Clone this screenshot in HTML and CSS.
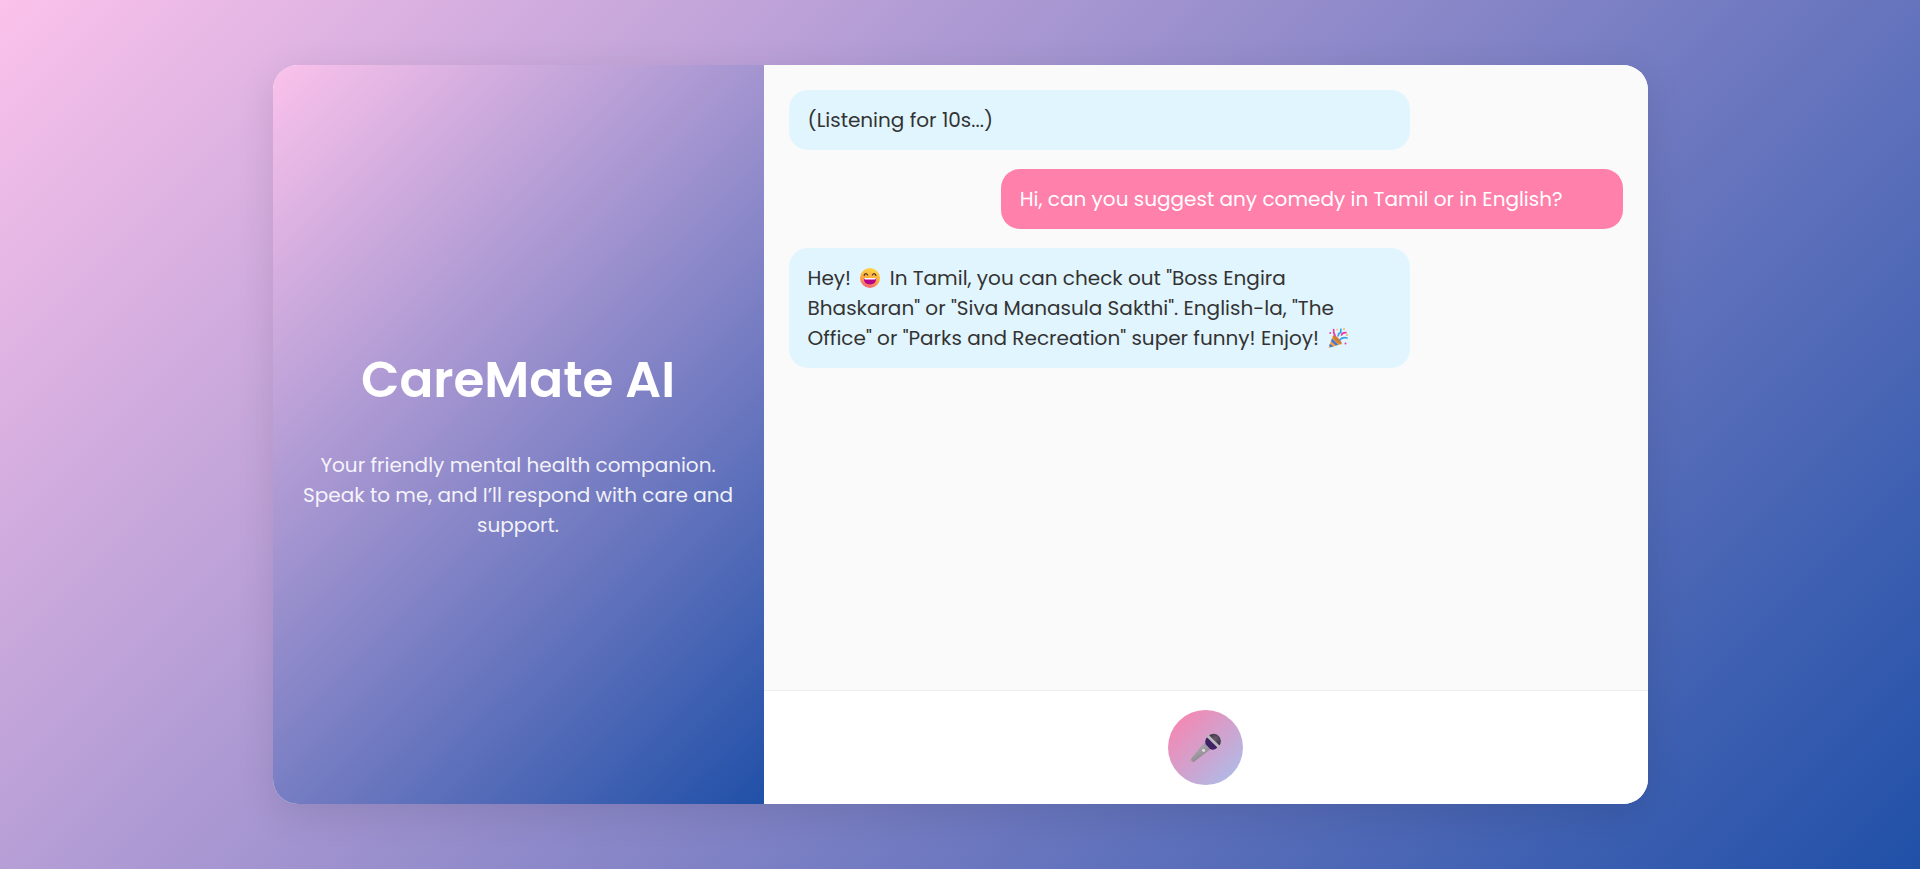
FILE: index.html
```html
<!DOCTYPE html>
<html lang="en">
<head>
<meta charset="utf-8">
<meta name="viewport" content="width=device-width, initial-scale=1">
<title>CareMate AI</title>
<link rel="stylesheet" href="styles.css">
</head>
<body>
<main class="card">
  <section class="intro">
    <h1 class="intro-title">CareMate AI</h1>
    <p class="intro-text">Your friendly mental health companion. Speak to me, and I’ll respond with care and support.</p>
  </section>
  <section class="chat">
    <div class="messages">
      <p class="message bot">(Listening for 10s...)</p>
      <p class="message user">Hi, can you suggest any comedy in Tamil or in English?</p>
      <p class="message bot">Hey! <svg class="emoji" viewBox="-2 0 28 24" role="img" aria-label="Grinning face"><defs><linearGradient id="face" x1="0.7" y1="0" x2="0.4" y2="1"><stop offset="0" stop-color="#ffd84a"/><stop offset="0.55" stop-color="#fdac3a"/><stop offset="1" stop-color="#f3607a"/></linearGradient></defs><circle cx="12" cy="12" r="10" fill="url(#face)"/><path d="M6.200 9.400q1.500-3.200 3.400-.4M14.400 9q1.900-2.800 3.400.4" fill="none" stroke="#5b3434" stroke-width="1.300" stroke-linecap="round"/><path d="M5.800 12h12.400q0 6.500-6.200 6.500T5.800 12z" fill="#b4008c"/><path d="M6.200 12h11.600q0 1.500-1.200 1.500H7.400Q6.200 13.500 6.200 12z" fill="#fff"/></svg> In Tamil, you can check out "Boss Engira Bhaskaran" or "Siva Manasula Sakthi". English-la, "The Office" or "Parks and Recreation" super funny! Enjoy! <svg class="emoji" viewBox="-2 0 28 24" role="img" aria-label="Party popper"><path d="M7 9.500l8.500 8.500L2.500 22z" fill="#f5a13c"/><path d="M6 12.500l6.500 6.200-2.800.9-4.700-4.400zM3.900 17.800l3.700 2.600-2.800.9-1.700-1.200z" fill="#4a78d6"/><ellipse cx="11.300" cy="13.800" rx="6" ry="2" transform="rotate(45 11.300 13.800)" fill="#cf8038"/><path d="M9 9.500Q7.200 7 7.600 3.500M15.500 9q.6-2.600 4.500-2.400" fill="none" stroke="#ee3aa0" stroke-width="1.700" stroke-linecap="round"/><path d="M12.200 9.800q.2-2.800 2.600-3.300-.2-2 .2-3.300M14 13.800q2.500-2.900 7-1.800" fill="none" stroke="#38a0e8" stroke-width="1.700" stroke-linecap="round"/><g fill="#e93aa0"><circle cx="4.200" cy="7" r=".9"/><circle cx="19.500" cy="17.500" r="1"/></g><g fill="#f6b743"><circle cx="18" cy="3" r=".9"/><circle cx="21" cy="9" r=".9"/><circle cx="11" cy="3.500" r=".8"/></g></svg></p>
    </div>
    <div class="controls">
      <button class="mic" type="button" aria-label="Speak"><svg class="mic-icon" viewBox="0 0 32 32" aria-hidden="true"><defs><linearGradient id="handle" x1=".2" y1="0" x2=".8" y2="1"><stop offset="0" stop-color="#b3afb5"/><stop offset=".5" stop-color="#9d999f"/><stop offset="1" stop-color="#7e7a82"/></linearGradient><radialGradient id="head" cx=".62" cy=".32" r=".7"><stop offset="0" stop-color="#655a6c"/><stop offset="1" stop-color="#292235"/></radialGradient></defs><path d="M14 11.800L1.300 27.600q-.8 1.400.4 2.600 1.300 1.200 2.800.4L20 18.500z" fill="url(#handle)"/><circle cx="23.700" cy="10" r="7.200" fill="url(#head)"/><path d="M17.200 6L27.500 16q-1.500 2.600-4.700 2.800-1.800 0-3-1l-4-4.300q-1.800-3.500 1.400-7.500z" fill="#3e2364"/><path d="M18 5.200L28.200 15.300" stroke="#bcb7c0" stroke-width="3" stroke-linecap="round"/><circle cx="13.600" cy="19.300" r="1.600" fill="#dedbe0"/></svg></button>
    </div>
  </section>
</main>
</body>
</html>
```
FILE: styles.css
```css
:root {
  --brand-gradient: linear-gradient(135deg, #fbc2eb 0%, #2050a8 100%);
}

body {
  margin: 0;
  min-height: 100vh;
  display: flex;
  align-items: center;
  justify-content: center;
  background: var(--brand-gradient);
  font-family: Poppins, Inter, sans-serif;
  font-size: 20px;
  line-height: 30px;
}

.card {
  display: grid;
  grid-template-columns: minmax(0, 10fr) minmax(0, 18fr);
  width: 90%;
  max-width: 1375px;
  height: 85vh;
  border-radius: 25px;
  overflow: hidden;
  background: #fff;
  box-shadow: 0 10px 38px rgba(0, 0, 0, 0.1);
}

.intro {
  padding: 37px 25px 24px;
  display: flex;
  flex-direction: column;
  align-items: center;
  justify-content: center;
  gap: 33px;
  background: var(--brand-gradient);
  color: #fff;
  text-align: center;
}

.intro-title {
  margin: 0;
  font-size: 50px;
  line-height: 75px;
  font-weight: 600;
}

.intro-text {
  margin: 0;
  opacity: 0.9;
}

.chat {
  display: flex;
  flex-direction: column;
  min-height: 0;
}

.messages {
  flex: 1;
  display: flex;
  flex-direction: column;
  gap: 19px;
  padding: 25px;
  overflow-y: auto;
  background: #fafafa;
}

.message {
  width: 70%;
  margin: 0;
  padding: 15px 19px;
  border-radius: 19px;
}

.bot {
  align-self: flex-start;
  background: #e1f5fe;
  color: #333;
}

.user {
  align-self: flex-end;
  background: #ff80ab;
  color: #fff;
}

.emoji {
  width: 28px;
  height: 24px;
  vertical-align: -5px;
}

.controls {
  display: flex;
  justify-content: center;
  padding: 19px;
  border-top: 1px solid #eee;
  background: #fff;
}

.mic {
  display: flex;
  align-items: center;
  justify-content: center;
  width: 75px;
  height: 75px;
  padding: 0;
  border: 0;
  border-radius: 50%;
  background: linear-gradient(135deg, #ff80ab, #a6c1ee);
  cursor: pointer;
}

.mic-icon {
  width: 32px;
  height: 32px;
}
```
